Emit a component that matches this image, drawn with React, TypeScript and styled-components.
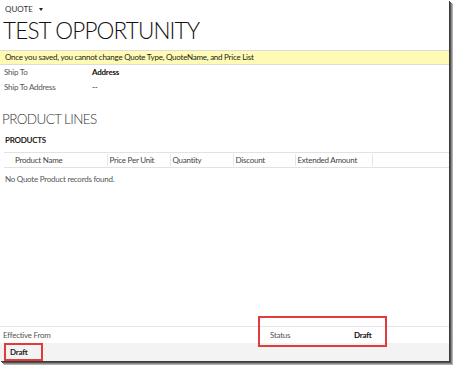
import React from "react";
import styled, { createGlobalStyle } from "styled-components";

const Global = createGlobalStyle`
  html, body { margin: 0; padding: 0; background: #fff; }
  body { width: 453px; height: 365px; overflow: hidden; }
`;

const Frame = styled.div`
  position: relative;
  width: 449px;
  height: 361px;
  display: flex;
  flex-direction: column;
  font-family: "Segoe UI", Lato, "Noto Sans", sans-serif;
  font-size: 8px;
  letter-spacing: -0.25px;
  color: #000;
  background: #fff;
  box-shadow: 1px 1px 0 #3a3a3a, 2px 2px 0 #555, 3px 3px 1px #888, 4px 4px 1px #bbb;
`;

const EntityMenu = styled.div`
  display: flex;
  align-items: center;
  gap: 6px;
  padding: 3px 0 0 5px;
  height: 12px;
  color: #333;
  letter-spacing: 0;
`;

const Caret = styled.span`
  width: 0;
  height: 0;
  border-left: 2.5px solid transparent;
  border-right: 2.5px solid transparent;
  border-top: 3px solid #222;
`;

const Title = styled.h1`
  margin: 3px 0 0 3px;
  font-size: 22.5px;
  line-height: 26px;
  font-weight: 300;
  letter-spacing: -0.85px;
  color: #111;
`;

const Notice = styled.div`
  margin-top: 6px;
  height: 13px;
  line-height: 13px;
  border-top: 1px solid #dcdcdc;
  border-bottom: 1px solid #dcdcdc;
  background: #fffbb4;
  padding-left: 5px;
  color: #222;
`;

const FieldRow = styled.div`
  display: grid;
  grid-template-columns: 88px 1fr;
  height: 15px;
  line-height: 15px;
  padding-left: 4px;
`;

const Label = styled.span`
  color: #555;
`;

const Value = styled.span<{ $bold?: boolean }>`
  color: #111;
  font-weight: ${(p) => (p.$bold ? 700 : 400)};
`;

const SectionTitle = styled.h2`
  margin: 15px 0 0 2px;
  font-size: 13.5px;
  line-height: 18px;
  font-weight: 300;
  letter-spacing: -0.6px;
  color: #333;
`;

const SubTitle = styled.h3`
  margin: 5px 0 0 5px;
  font-size: 8px;
  line-height: 14px;
  font-weight: 700;
  color: #222;
`;

const GridHeader = styled.div`
  display: flex;
  margin: 5px 0 0 4px;
  height: 14px;
  border-top: 1px solid #e2e2e2;
  border-bottom: 1px solid #e2e2e2;
`;

const HeadCell = styled.div<{ $w: number; $first?: boolean }>`
  width: ${(p) => p.$w}px;
  box-sizing: border-box;
  padding-left: ${(p) => (p.$first ? 11 : 1.5)}px;
  border-left: ${(p) => (p.$first ? "none" : "1px solid #e6e6e6")};
  margin: 1px 0;
  line-height: 12px;
  color: #444;
`;

const Empty = styled.div`
  margin: 4px 0 0 5px;
  line-height: 14px;
  color: #555;
`;

const Spacer = styled.div`
  flex: 1;
`;

const BottomRow = styled.div`
  display: flex;
  align-items: center;
  height: 16px;
  border-top: 1px solid #e4e4e4;
`;

const EffectiveLabel = styled.span`
  width: 267px;
  padding-left: 3px;
  color: #555;
`;

const StatusLabel = styled.span`
  width: 84px;
  color: #555;
`;

const StatusValue = styled.span`
  font-weight: 700;
  color: #111;
`;

const Footer = styled.div`
  height: 18px;
  line-height: 18px;
  background: #f3f3f3;
  padding-left: 10px;
  font-weight: 700;
  color: #222;
`;

const Highlight = styled.div<{ $l: number; $t: number; $w: number; $h: number }>`
  position: absolute;
  left: ${(p) => p.$l}px;
  top: ${(p) => p.$t}px;
  width: ${(p) => p.$w}px;
  height: ${(p) => p.$h}px;
  box-sizing: border-box;
  border: 2px solid #e23b3b;
  pointer-events: none;
`;

const columns: { name: string; w: number }[] = [
  { name: "Product Name", w: 103 },
  { name: "Price Per Unit", w: 63 },
  { name: "Quantity", w: 63 },
  { name: "Discount", w: 62 },
  { name: "Extended Amount", w: 77 },
  { name: "", w: 77 },
];

export default function App() {
  return (
    <>
      <Global />
      <Frame>
        <EntityMenu>
          QUOTE <Caret />
        </EntityMenu>
        <Title>TEST OPPORTUNITY</Title>
        <Notice>Once you saved, you cannot change Quote Type, QuoteName, and Price List</Notice>
        <FieldRow>
          <Label>Ship To</Label>
          <Value $bold>Address</Value>
        </FieldRow>
        <FieldRow>
          <Label>Ship To Address</Label>
          <Value>--</Value>
        </FieldRow>
        <SectionTitle>PRODUCT LINES</SectionTitle>
        <SubTitle>PRODUCTS</SubTitle>
        <GridHeader>
          {columns.map((c, i) => (
            <HeadCell key={i} $w={c.w} $first={i === 0}>
              {c.name}
            </HeadCell>
          ))}
        </GridHeader>
        <Empty>No Quote Product records found.</Empty>
        <Spacer />
        <BottomRow>
          <EffectiveLabel>Effective From</EffectiveLabel>
          <StatusLabel>Status</StatusLabel>
          <StatusValue>Draft</StatusValue>
        </BottomRow>
        <Footer>Draft</Footer>
        <Highlight $l={258} $t={316} $w={129} $h={31} />
        <Highlight $l={4} $t={343} $w={39} $h={18} />
      </Frame>
    </>
  );
}
